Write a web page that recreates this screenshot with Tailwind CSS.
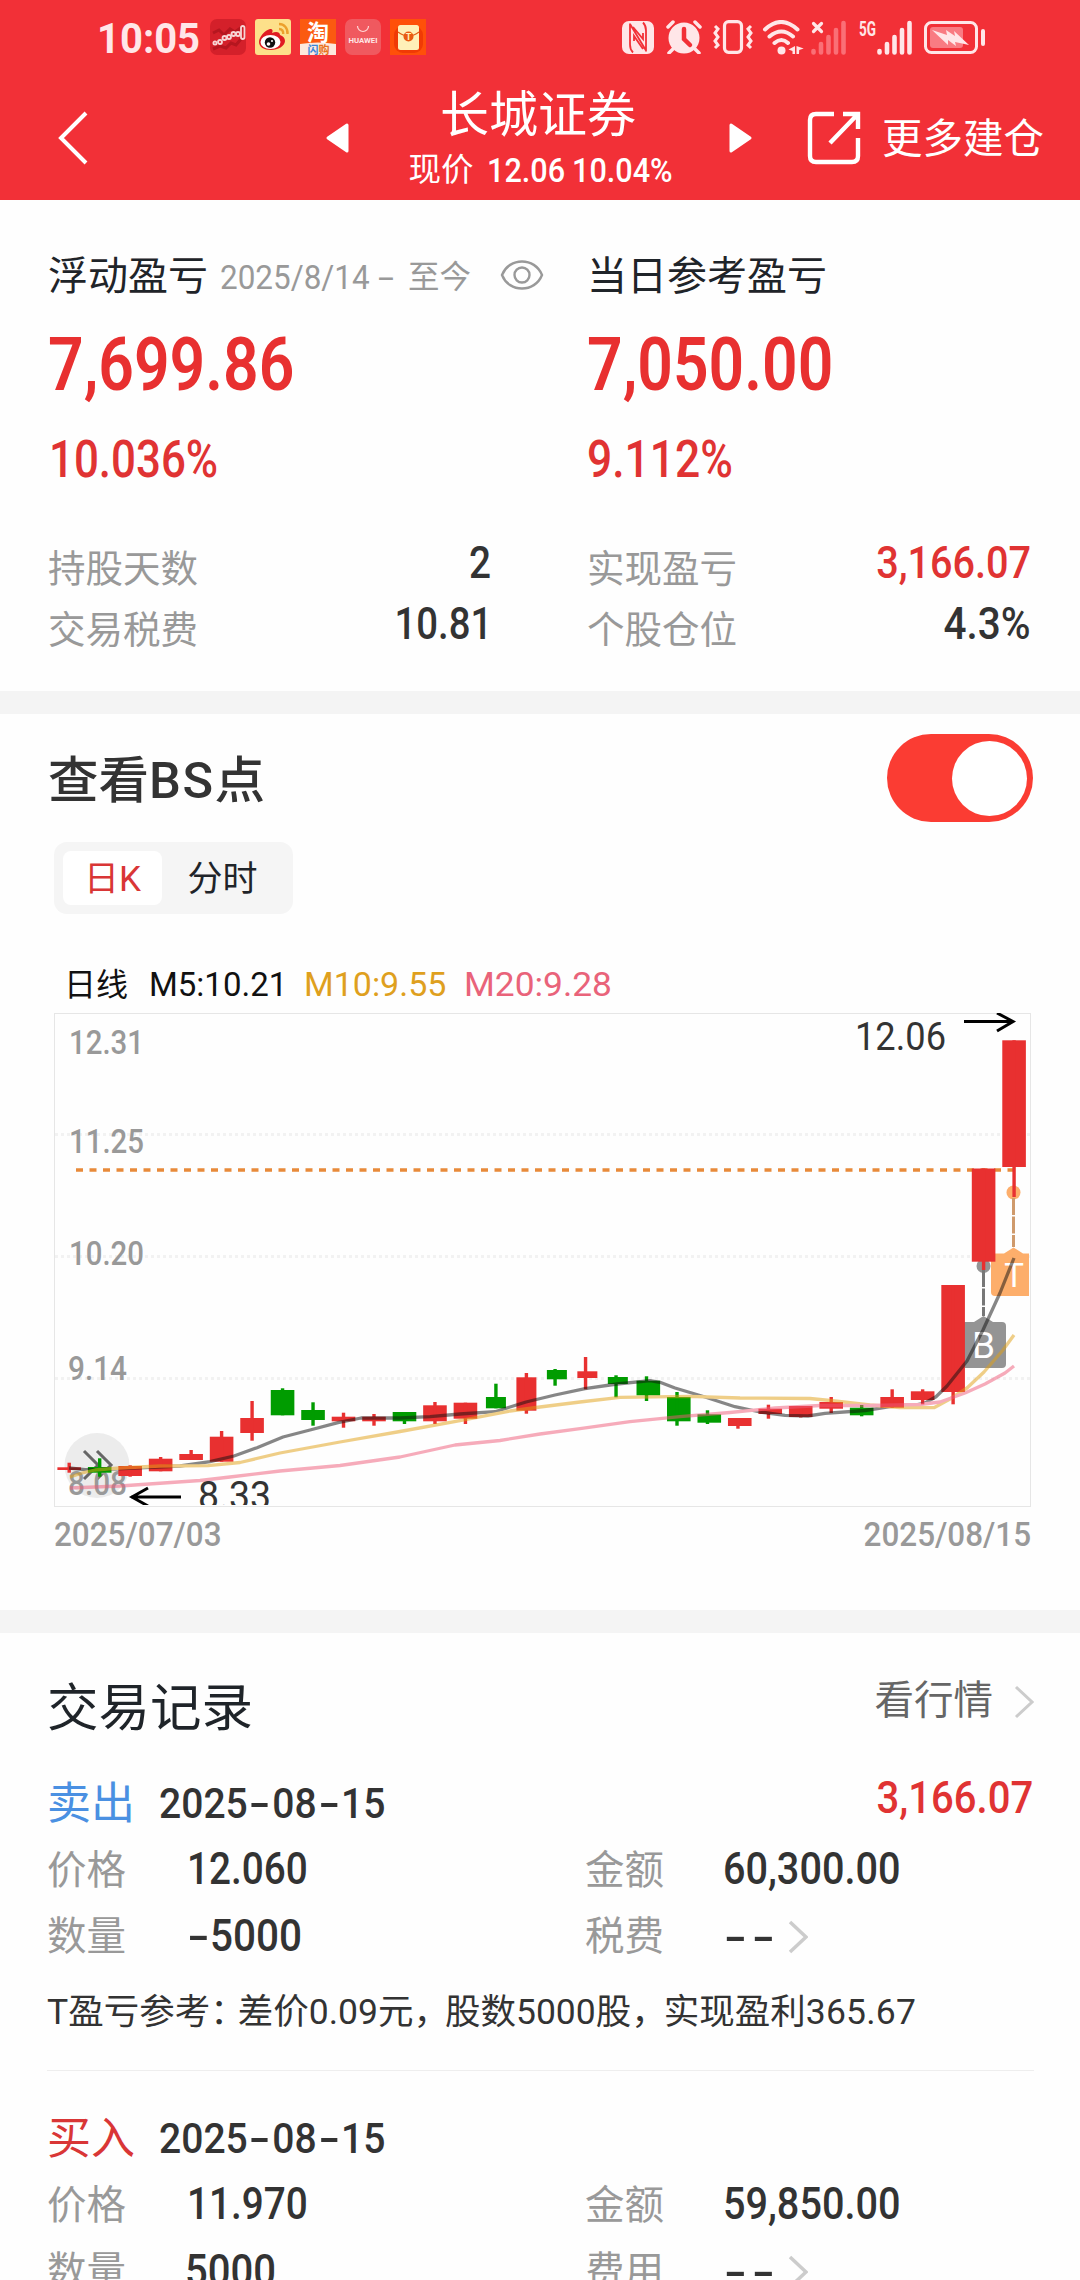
<!DOCTYPE html>
<html lang="zh-CN">
<head>
<meta charset="utf-8">
<title>长城证券</title>
<script src="https://cdn.jsdelivr.net/npm/@tailwindcss/browser@4"></script>
</head>
<body class="bg-white">
<main class="w-[1080px] h-[2280px] overflow-hidden bg-[#fefefe] flex flex-col whitespace-nowrap leading-none text-[#333] font-['Roboto','Noto_Sans_CJK_SC',sans-serif]">

  <header class="h-[200px] shrink-0 bg-[#f23037] text-white">
    <!-- status bar -->
    <div class="h-[74px] flex items-center pl-[97px]">
      <span class="w-[113px] text-[43px] font-bold text-[#ffe6e8] pt-[3px]"><span class="inline-block origin-left scale-x-[0.93]">10:05</span></span>
      <div class="flex gap-[9px]">
        <svg class="w-9 h-9" viewBox="0 0 36 36"><rect width="36" height="36" rx="7" fill="#d4202a"/><path d="M3 14l6-3 5 5 6-6 5 3 7-5M3 30l7-3 6 2 5-5 5 2 5-6" fill="none" stroke="#b5161f" stroke-width="3"/><g fill="none" stroke="#f7d5d5" stroke-width="1.800"><circle cx="5" cy="24" r="1.600"/><circle cx="10" cy="23" r="2"/><circle cx="14.500" cy="19" r="2"/><circle cx="19" cy="18" r="2"/><circle cx="23.500" cy="15" r="2"/><circle cx="28" cy="15" r="2"/><rect x="31" y="7" width="3.500" height="13" rx="1.700"/></g></svg>
        <svg class="w-9 h-9" viewBox="0 0 36 36"><rect width="36" height="36" rx="3" fill="#fde08a"/><path d="M4 23c0-5 6-12 11-13 3 0 3 2 2 4 4-2 8-1 8 2 3 1 5 3 5 6 0 5-7 9-14 9S4 28 4 23z" fill="#e01b22"/><ellipse cx="15.500" cy="23" rx="10" ry="7" fill="#fff"/><circle cx="15" cy="23.500" r="5.200" fill="#111"/><circle cx="13.500" cy="25" r="1.800" fill="#fff"/><circle cx="17" cy="22" r="1" fill="#fff"/><path d="M24 5c5 0 9 4 8.500 10M24 10c3 0 4.500 2 4.200 5" fill="none" stroke="#eca02c" stroke-width="2.400"/></svg>
        <svg class="w-9 h-9" viewBox="0 0 36 36"><rect width="36" height="36" fill="#fb5a10"/><path d="M0 25q18-3 36 0v11H0z" fill="#fde9dc"/><text x="18" y="21" text-anchor="middle" font-size="22" font-weight="700" fill="#fff">淘</text><text x="18.500" y="34.500" text-anchor="middle" font-size="11" font-weight="700" fill="#e8721c"><tspan fill="#3a86d8">闪</tspan>购</text></svg>
        <svg class="w-9 h-9" viewBox="0 0 36 36"><rect width="36" height="36" rx="7" fill="#f0595f"/><path d="M12.500 7a5.500 5.500 0 0 0 11 0" fill="none" stroke="#ffd6d6" stroke-width="1.200"/><text x="3.500" y="23.500" font-size="7" font-weight="700" fill="#ffe6e6" textLength="29" lengthAdjust="spacingAndGlyphs">HUAWEI</text></svg>
        <svg class="w-9 h-9" viewBox="0 0 36 36"><rect width="36" height="36" fill="#ff5009"/><rect x="4" y="7" width="29" height="27" rx="9" fill="#f03a05"/><rect x="8" y="6" width="21" height="25" rx="2.500" fill="#fff0b8"/><path d="M8 13q10.500 8 21 0" fill="none" stroke="#e05a10" stroke-width="1.200"/><circle cx="18.500" cy="17.500" r="5" fill="#ea5a10"/><text x="18.500" y="21" text-anchor="middle" font-size="9" font-weight="700" fill="#fff0b8">T</text></svg>
      </div>
      <svg class="ml-[196px] w-8 h-[33px]" viewBox="0 0 32 33"><rect width="32" height="33" rx="7" fill="#ffe6e8"/><path d="M8 2.500v21q0 5 3 8M8 3l16 26.500M24 30.500v-21q0-5-3-8M12 20v-5l9 13M21 12v6L11 6" fill="none" stroke="#f23037" stroke-width="1.800"/></svg>
      <svg class="ml-3 w-9 h-[34px]" viewBox="0 0 36 34"><circle cx="18" cy="18" r="15.500" fill="#ffe6e8"/><path d="M2 7l5-5M34 7l-5-5M7 29l-4 4M29 29l4 4" stroke="#ffe6e8" stroke-width="3.500" stroke-linecap="round"/><path d="M18 9v10l6 6" fill="none" stroke="#f23037" stroke-width="4.500" stroke-linecap="round"/></svg>
      <svg class="ml-[11px] w-10 h-[34px]" viewBox="0 0 40 34" fill="none" stroke="#ffe6e8"><rect x="11.500" y="1.700" width="17" height="30.600" rx="4" stroke-width="3.200"/><path d="M2 6l3 3-3 4 3 4-3 4 3 4-3 3M38 6l-3 3 3 4-3 4 3 4-3 4 3 3" stroke-width="3"/></svg>
      <svg class="ml-[9px] w-[42px] h-[35px]" viewBox="0 0 42 35"><g fill="none" stroke="#ffe6e8" stroke-width="4" stroke-linecap="round"><path d="M3 9.500q16-15 32.500 0M7.500 16.500q12-10 23.500 0M12.500 23q7-6 13.500 0"/></g><circle cx="19.500" cy="30.500" r="4" fill="#ffe6e8"/><path d="M33 26v8h-2.500v-3l-4-1.500zM34.500 26v8H37l.2-4 4.500-1.500z" fill="#ffe6e8"/></svg>
      <svg class="ml-[7px] w-[37px] h-[35px]" viewBox="0 0 37 35" stroke-linecap="round"><path d="M2.500 3.500l8 8M10.500 3.500l-8 8" stroke="#ffe6e8" stroke-width="3.200"/><path d="M2.500 31v1.500M10 24v8.500M17.500 17v15.500M25 10v22.500M32.500 3v29.500" stroke="#fa6f76" stroke-width="4.600"/></svg>
      <svg class="ml-[11px] w-[56px] h-[35px] overflow-visible" viewBox="0 0 56 35"><text x="0" y="15.500" font-size="20" font-weight="700" fill="#ffe6e8" textLength="17" lengthAdjust="spacingAndGlyphs">5G</text><path d="M20.500 31v1.500M28 24v8.500M35.500 17v15.500M43 10v22.500M50.500 3v29.500" stroke="#ffe6e8" stroke-width="4.600" stroke-linecap="round"/></svg>
      <svg class="ml-[9px] w-[62px] h-[33px]" viewBox="0 0 62 33"><rect x="1.500" y="1.500" width="51" height="30" rx="6" fill="none" stroke="#ffe6e8" stroke-width="3"/><rect x="6" y="6" width="33" height="21" rx="3" fill="#f97b82"/><rect x="57" y="8" width="4" height="17" rx="2" fill="#ffe6e8"/><path d="M8 9l15 5-1-5 9 6-1-5 15 14-14-3 1 4-8-6v5z" fill="#ffe6e8"/></svg>
    </div>
    <!-- navigation -->
    <div class="h-[126px] flex items-center pl-[58px] pt-[2px]">
      <svg class="w-[30px] h-[54px]" viewBox="0 0 30 54"><path d="M28 2L3 27l25 25" fill="none" stroke="#fff" stroke-width="4"/></svg>
      <svg class="ml-[238px] w-[23px] h-[30px]" viewBox="0 0 23 30"><path d="M21 2v26L2 15z" fill="#fff" stroke="#fff" stroke-width="3" stroke-linejoin="round"/></svg>
      <div class="ml-[10px] w-[361px] flex flex-col items-center pt-[6px]">
        <div class="h-[56px] leading-[61px] text-[49px] pr-[3px]">长城证券</div>
        <div class="h-[56px] leading-[58px] flex text-[34px] font-medium"><span class="w-[78px] text-[32.500px] font-normal">现价</span><span class="w-[85px]"><span class="inline-block origin-left scale-x-[0.9]">12.06</span></span><span class="w-[99px]"><span class="inline-block origin-left scale-x-[0.9]">10.04%</span></span></div>
      </div>
      <svg class="ml-[9px] w-[23px] h-[30px]" viewBox="0 0 23 30"><path d="M2 2v26l19-13z" fill="#fff" stroke="#fff" stroke-width="3" stroke-linejoin="round"/></svg>
      <svg class="ml-[55px] w-[54px] h-[54px]" viewBox="0 0 54 54" fill="none" stroke="#fff" stroke-width="4.400"><path d="M27 3H9Q3 3 3 9v36q0 6 6 6h36q6 0 6-6V27"/><path d="M36 3h15v15M50 4L23 32"/></svg>
      <span class="ml-[21px] text-[40.500px] leading-[60px] pt-px">更多建仓</span>
    </div>
  </header>

  <!-- profit summary -->
  <section class="h-[491px] shrink-0 pt-[45px] px-[48px] grid grid-cols-[443px_443px] gap-x-[97px] content-start">
    <div>
      <div class="h-[60px] leading-[64px] flex text-[#999]">
        <span class="w-[172px] shrink-0 text-[40px] text-[#1f2429]">浮动盈亏</span>
        <span class="w-[158px] shrink-0 text-[34px]"><span class="inline-block origin-left scale-x-[0.925]">2025/8/14</span></span>
        <span class="w-[30px] shrink-0 text-[34px]"><span class="inline-block origin-left scale-x-[1.700]">-</span></span>
        <span class="shrink-0 text-[31.500px] leading-[66px]">至今</span>
        <svg class="shrink-0 ml-[29px] mt-[14px] w-[44px] h-[32px]" viewBox="0 0 44 32" fill="none" stroke="#999" stroke-width="2.400"><path d="M2 16C9-2 35-2 42 16 35 34 9 34 2 16z"/><circle cx="22" cy="16" r="7.500"/></svg>
      </div>
      <div class="h-[117px] leading-[118px] text-[75px] font-semibold text-[#e83030]"><span class="inline-block origin-left scale-x-[0.832]">7,699.86</span></div>
      <div class="h-[73px] leading-[75px] text-[51px] font-medium text-[#e03333] pl-px"><span class="inline-block origin-left scale-x-[0.86]">10.036%</span></div>
      <div class="mt-[36px] h-[61px] leading-[64px] flex justify-between"><span class="pt-[6px] text-[37.500px] text-[#999]">持股天数</span><span class="inline-block origin-right scale-x-[0.88] text-[44px] font-medium">2</span></div>
      <div class="h-[61px] leading-[64px] flex justify-between"><span class="pt-[6px] text-[37.500px] text-[#999]">交易税费</span><span class="-mr-px inline-block origin-right scale-x-[0.87] text-[44px] font-medium">10.81</span></div>
    </div>
    <div class="-ml-px w-[444px]">
      <div class="h-[60px] leading-[64px] text-[40px] text-[#1f2429]">当日参考盈亏</div>
      <div class="h-[117px] leading-[118px] text-[75px] font-semibold text-[#e83030]"><span class="inline-block origin-left scale-x-[0.832]">7,050.00</span></div>
      <div class="h-[73px] leading-[75px] text-[51px] font-medium text-[#e03333]"><span class="inline-block origin-left scale-x-[0.87]">9.112%</span></div>
      <div class="mt-[36px] h-[61px] leading-[64px] flex justify-between"><span class="pt-[6px] text-[37.500px] text-[#999]">实现盈亏</span><span class="inline-block origin-right scale-x-[0.9] text-[44px] font-medium text-[#e03333]">3,166.07</span></div>
      <div class="h-[61px] leading-[64px] flex justify-between"><span class="pt-[6px] text-[37.500px] text-[#999]">个股仓位</span><span class="inline-block origin-right scale-x-[0.92] text-[44px] font-medium">4.3%</span></div>
    </div>
  </section>

  <div class="h-[23px] shrink-0 bg-[#f4f4f4]"></div>

  <!-- chart -->
  <section class="h-[896px] shrink-0">
    <div class="h-[128px] pl-[48px] pr-[47px] flex items-center justify-between">
      <h2 class="text-[50.500px] leading-[60px] pt-[5px] font-medium">查看<span class="tracking-[1.500px]">BS</span>点</h2>
      <span class="w-[146px] h-[88px] rounded-full bg-[#fb3c33] flex items-center justify-end pr-[6px]"><i class="block w-[75px] h-[75px] rounded-full bg-white"></i></span>
    </div>
    <div class="ml-[54px] w-[239px] h-[72px] rounded-[13px] bg-[#f5f5f5] p-[9px] flex text-[35px] leading-[57px] text-center">
      <span class="w-[99px] h-[54px] rounded-[8px] bg-white text-[#d93636]">日K</span>
      <span class="w-[122px] pr-px text-[#1f2429]">分时</span>
    </div>
    <div class="mt-[40px] h-[58px] leading-[62px] pl-[64px] flex text-[33px]">
      <span class="w-[85px] text-[32px] text-[#111]">日线</span>
      <span class="w-[155px] text-[#111]"><span class="inline-block origin-left">M5:10.21</span></span>
      <span class="w-[160px] text-[#dfa01e]"><span class="inline-block origin-left scale-x-[1.03]">M10:9.55</span></span>
      <span class="text-[#e9637a]"><span class="inline-block origin-left scale-x-[1.07]">M20:9.28</span></span>
    </div>
    <svg id="chart" class="block w-[1080px] h-[496px]" viewBox="0 1012 1080 496">
      <defs><clipPath id="plot"><rect x="55" y="1013" width="974" height="492"/></clipPath></defs>
      <rect x="54.500" y="1013.500" width="976" height="493" fill="#fefefe" stroke="#e6e6e6"/>
      <path d="M55 1134.500H1030M55 1256.500H1030M55 1378.500H1030" stroke="#f2f2f2" stroke-width="3" stroke-dasharray="3 3"/>
      <path d="M76 1170H1014" stroke="#e88a3a" stroke-width="3.500" stroke-dasharray="7 6.500"/>
      <circle cx="97" cy="1465.500" r="32.500" fill="#ececec"/>
      <path d="M84 1451l14 14-14 14M97 1451l14 14-14 14" fill="none" stroke="#666" stroke-width="3"/>
      <g font-size="33" font-weight="500" fill="#999">
        <text x="69" y="1054" textLength="75" lengthAdjust="spacingAndGlyphs">12.31</text>
        <text x="69" y="1153" textLength="75" lengthAdjust="spacingAndGlyphs">11.25</text>
        <text x="69" y="1265" textLength="75" lengthAdjust="spacingAndGlyphs">10.20</text>
        <text x="68" y="1380" textLength="59" lengthAdjust="spacingAndGlyphs">9.14</text>
        <text x="68" y="1495" textLength="59" lengthAdjust="spacingAndGlyphs">8.08</text>
      </g>
      <g clip-path="url(#plot)">
        <g fill="#949494"><circle cx="983.500" cy="1266" r="7"/><path d="M965 1322h9l9.500-6 9.500 6h9q4 0 4 4v38q0 4-4 4h-37q-4 0-4-4v-38q0-4 4-4z"/></g>
        <path d="M983.500 1270v46" stroke="#777" stroke-width="3" stroke-dasharray="17 1.500"/>
        <g fill="#fdae6b"><circle cx="1013.500" cy="1192.500" r="7"/><path d="M995 1253.500h9l9.500-6 9.500 6h20v42.500h-48q-4 0-4-4v-34.500q0-4 4-4z"/></g>
        <path d="M1013.500 1198v49" stroke="#cf9a6c" stroke-width="3" stroke-dasharray="17 1.500"/>
        <text x="983.500" y="1358" text-anchor="middle" font-size="37" fill="#fff">B</text>
        <text x="1014" y="1287" text-anchor="middle" font-size="33" fill="#fff">T</text>
        <g id="candles"></g>
        <g fill="none" stroke-width="3.300" stroke-linejoin="round" opacity="0.500">
          <polyline stroke="#111" points="69,1468 85,1469.700 100,1469.500 180,1466 210,1461.700 234,1456 257,1447.700 283,1437 310,1430 338,1422.700 361,1418 400,1418 430,1416.700 460,1414 495,1411.700 510,1407 526,1402 555,1395 585,1388.700 617,1384 650,1380.700 660,1382.300 675,1388 705,1397 735,1406.700 760,1412 785,1415.300 808,1416 825,1413.300 865,1410.500 890,1406.700 915,1405 925,1403 936,1396.700 947,1386 967,1361 983,1330 1000,1293 1014,1258"/>
          <polyline stroke="#e2a013" points="70,1477 82,1473 95,1470 120,1468 160,1466 208,1465.700 240,1462.500 280,1453 340,1442 400,1431.500 460,1420.700 510,1411 540,1407 580,1402 620,1397.300 690,1396.300 740,1398 810,1398.500 835,1401 870,1405 900,1407.500 934,1407.700 950,1399 967,1388 984,1372 1003,1350 1014,1335"/>
          <polyline stroke="#f05a78" points="70,1488 120,1486 200,1480.500 230,1477 280,1471 340,1465.500 400,1457 455,1445 500,1440.500 540,1434 580,1428.700 630,1421.700 680,1416.700 730,1412.500 775,1408 820,1405.500 870,1405.500 920,1404.500 940,1402 965,1393 985,1384 1005,1373 1014,1366"/>
        </g>
        <g font-size="39" fill="#333">
          <text x="855" y="1050" textLength="91" lengthAdjust="spacingAndGlyphs">12.06</text>
          <text x="198" y="1508.500" textLength="73" lengthAdjust="spacingAndGlyphs">8.33</text>
        </g>
        <path d="M964 1021.500h49M997 1013l16 8.500-16 9.500M181 1497h-50M148 1488l-16 9 16 9" fill="none" stroke="#000" stroke-width="3"/>
      </g>
    </svg>
    <div class="h-[52px] leading-[53px] pl-[54px] pr-[49px] flex justify-between text-[34px] font-medium text-[#999]"><span class="inline-block origin-left scale-x-[0.925]">2025/07/03</span><span class="inline-block origin-right scale-x-[0.925]">2025/08/15</span></div>
  </section>

  <div class="h-[23px] shrink-0 bg-[#f4f4f4]"></div>

  <!-- trade records -->
  <section class="shrink-0 pl-[47px] pr-[46px]">
    <div class="h-[146px] flex justify-between items-center">
      <h2 class="text-[51.500px] leading-[60px] pt-[5px] text-[#1f2429]">交易记录</h2>
      <a class="pb-[10px] flex items-center text-[39.500px] leading-[60px] text-[#666]">看行情<svg class="ml-[21px] mt-[2px] w-[20px] h-[34px]" viewBox="0 0 20 34"><path d="M2 2l16 15L2 32" fill="none" stroke="#ccc" stroke-width="3"/></svg></a>
    </div>
    <article>
      <div class="h-[46px] leading-[50px] flex text-[42px] font-medium">
        <span class="w-[112px] text-[44px] font-normal text-[#4a90e2]">卖出</span>
        <span class="inline-block origin-left scale-x-[0.93]">2025<i class="inline-block not-italic scale-x-[1.600] mx-[6px]">-</i>08<i class="inline-block not-italic scale-x-[1.600] mx-[6px]">-</i>15</span>
        <span class="ml-auto -mt-[6px] pr-px inline-block origin-right scale-x-[0.91] text-[44px] text-[#e03333]">3,166.07</span>
      </div>
      <div class="mt-[11px] grid grid-cols-[140px_398px_138px_1fr] leading-[67px] text-[44px] font-medium">
        <span class="text-[39.500px] leading-[70px] font-normal text-[#999]">价格</span><span class="inline-block origin-left scale-x-[0.88]">12.060</span>
        <span class="text-[39.500px] leading-[70px] font-normal text-[#999]">金额</span><span class="inline-block origin-left scale-x-[0.9]">60,300.00</span>
      </div>
      <div class="-mt-[4px] grid grid-cols-[140px_398px_138px_1fr] leading-[68px] text-[44px] font-medium">
        <span class="text-[39.500px] leading-[70px] font-normal text-[#999]">数量</span><span class="inline-block origin-left scale-x-[0.92]"><i class="inline-block not-italic scale-x-[1.600] mx-[5px]">-</i>5000</span>
        <span class="text-[39.500px] leading-[70px] font-normal text-[#999]">税费</span><span class="flex items-center"><i class="inline-block not-italic scale-x-[1.500] ml-[5px] mr-[7px]">-</i><i class="inline-block not-italic scale-x-[1.500] mx-[6px]">-</i><svg class="ml-[11px] w-[20px] h-[34px]" viewBox="0 0 20 34"><path d="M2 2l16 15L2 32" fill="none" stroke="#ccc" stroke-width="3.500"/></svg></span>
      </div>
      <p class="-mt-[4px] h-[103px] leading-[88px] text-[35.500px] border-b border-[#eee]">T盈亏参考<span class="tracking-[-8px]">：</span>差价0.09元<span class="tracking-[-4px]">，</span>股数5000股<span class="tracking-[-3px]">，</span>实现盈利<span class="tracking-[0.200px]">365.67</span></p>
    </article>
    <article class="pt-[43px]">
      <div class="h-[46px] leading-[50px] flex text-[42px] font-medium">
        <span class="w-[112px] text-[44px] font-normal text-[#d93636]">买入</span>
        <span class="inline-block origin-left scale-x-[0.93]">2025<i class="inline-block not-italic scale-x-[1.600] mx-[6px]">-</i>08<i class="inline-block not-italic scale-x-[1.600] mx-[6px]">-</i>15</span>
      </div>
      <div class="mt-[11px] grid grid-cols-[140px_398px_138px_1fr] leading-[66px] text-[44px] font-medium">
        <span class="text-[39.500px] leading-[70px] font-normal text-[#999]">价格</span><span class="inline-block origin-left scale-x-[0.88]">11.970</span>
        <span class="text-[39.500px] leading-[70px] font-normal text-[#999]">金额</span><span class="inline-block origin-left scale-x-[0.9]">59,850.00</span>
      </div>
      <div class="-mt-[4px] grid grid-cols-[138px_400px_138px_1fr] leading-[68px] text-[44px] font-medium">
        <span class="text-[39.500px] leading-[70px] font-normal text-[#999]">数量</span><span class="inline-block origin-left scale-x-[0.91]">5000</span>
        <span class="text-[39.500px] leading-[70px] font-normal text-[#999]">费用</span><span class="flex items-center"><i class="inline-block not-italic scale-x-[1.500] ml-[5px] mr-[7px]">-</i><i class="inline-block not-italic scale-x-[1.500] mx-[6px]">-</i><svg class="ml-[11px] w-[20px] h-[34px]" viewBox="0 0 20 34"><path d="M2 2l16 15L2 32" fill="none" stroke="#ccc" stroke-width="3.500"/></svg></span>
      </div>
    </article>
  </section>
</main>
<script>
// each candle: rising flag, body top, body bottom, wick top, wick bottom
const candles = [
 [1,1467.3,1470,1462.7,1472.7],[0,1467,1472.7,1458.3,1476.7],[1,1466,1476,1465.3,1476.7],[1,1458.7,1471.3,1457,1471.3],
 [1,1454,1460,1450,1460],[1,1436.7,1461.7,1431,1461.7],[1,1418,1433,1401,1440.7],[0,1390,1415.3,1388.3,1415.3],
 [0,1410,1420,1402.3,1425.7],[1,1416.7,1421.3,1412.7,1427.7],[1,1416.7,1421.3,1414,1425.7],[0,1412,1421.3,1412,1424],
 [1,1405.3,1421.3,1402,1424],[1,1402.7,1418.7,1402.7,1424],[0,1397,1408.3,1383.7,1408.3],[1,1377.3,1410.7,1373,1413.7],
 [0,1370,1379.3,1369,1385.7],[1,1371.3,1378,1357,1389.3],[0,1377,1384,1375.3,1397.3],[0,1380.7,1395.3,1376.3,1401],
 [0,1397,1421.3,1392,1425.7],[0,1414.3,1422.7,1410.3,1424],[1,1418,1426,1418,1428.7],[1,1408.7,1414,1404.7,1418.7],
 [1,1406,1417,1406,1417.5],[1,1402,1408.7,1397,1413],[0,1407.7,1415.3,1405,1416.3],[1,1397,1407.7,1389.3,1407.7],
 [1,1391.3,1400,1389.3,1404.3],[1,1285,1392,1285,1404.3],[1,1168.5,1261.7,1168.5,1270],[1,1040.3,1167,1040.3,1197]];
document.getElementById('candles').innerHTML = candles.map(([up,t,b,wt,wb],i)=>{
  const x = 69.2+30.48*i, w = i>=14&&i<=18 ? 20 : 23.6, c = up ? '#e83030' : '#009c00';
  const wx = i>=16&&i<=23 ? x-1.8 : x;
  return `<rect x="${x-w/2}" y="${t}" width="${w}" height="${b-t}" fill="${c}"/><rect x="${wx-1.7}" y="${wt}" width="3.4" height="${wb-wt}" fill="${c}"/>`;
}).join('');
</script>
</body>
</html>
